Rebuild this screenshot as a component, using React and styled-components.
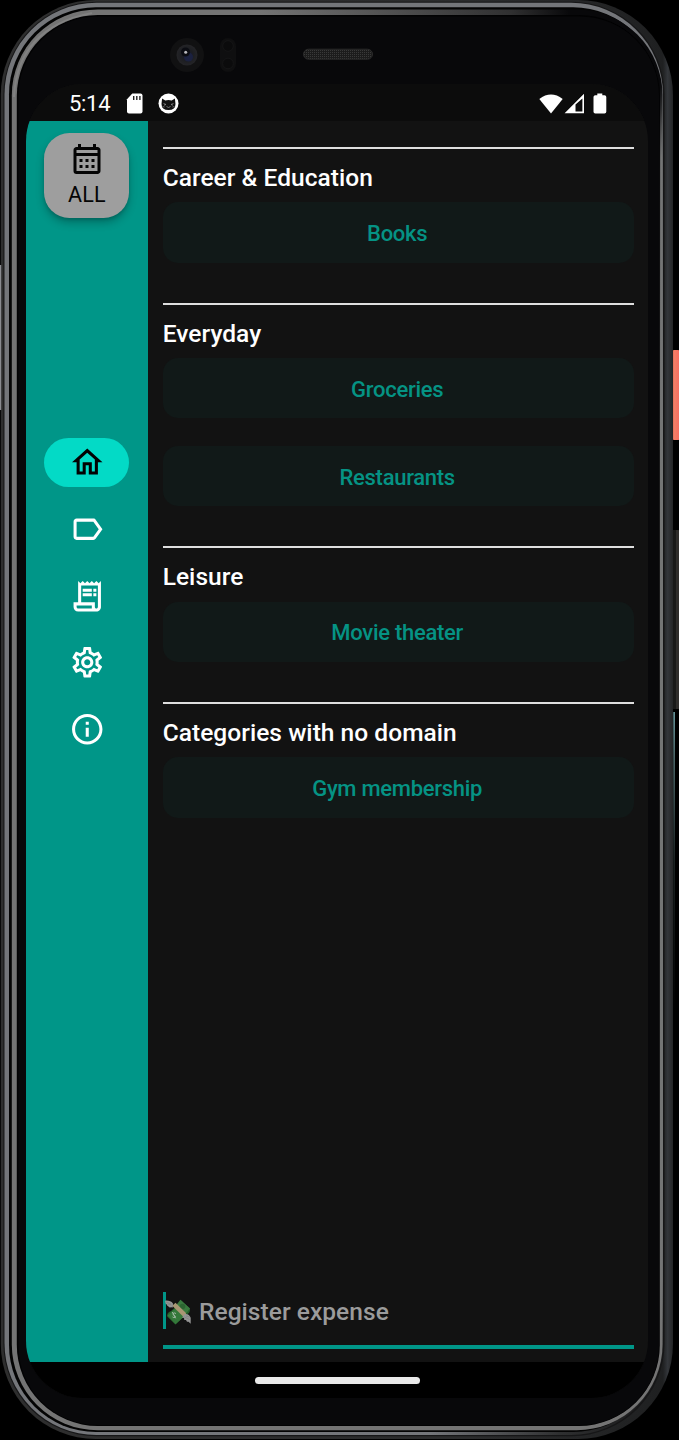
import React from "react";
import styled, { createGlobalStyle } from "styled-components";
import {
  MdOutlineHome,
  MdOutlineLabel,
  MdOutlineReceiptLong,
  MdOutlineSettings,
  MdInfoOutline,
  MdOutlineCalendarMonth,
} from "react-icons/md";

const GlobalStyle = createGlobalStyle`
  *, *::before, *::after { box-sizing: border-box; }
  html, body { margin: 0; padding: 0; background: #000; overflow: hidden; }
  body { font-family: Roboto, "Liberation Sans", sans-serif; }
`;

const Device = styled.div`
  display: grid;
  width: 679px;
  height: 1440px;
  background: #000;
`;

const Casing = styled.svg`
  grid-area: 1 / 1;
  display: block;
`;

const Screen = styled.div`
  grid-area: 1 / 1;
  z-index: 1;
  display: flex;
  flex-direction: column;
  width: 622px;
  height: 1314px;
  margin: 84px 0 0 26px;
  border-radius: 57px;
  overflow: hidden;
  background: #121212;
`;

const StatusBar = styled.header`
  display: flex;
  align-items: center;
  flex: 0 0 36.5px;
  padding: 3px 41px 0 43px;
  background: #0c0c0c;
  color: #fff;
`;

const Clock = styled.span`
  width: 57px;
  font-size: 22px;
  line-height: 32px;
  letter-spacing: -0.3px;
`;

const StatusIcon = styled.svg`
  display: block;
  margin-left: ${(p) => p.$gap || 0}px;
`;

const Spacer = styled.div`
  flex: 1;
`;

const Body = styled.div`
  display: flex;
  flex: 0 0 1241px;
`;

const Rail = styled.nav`
  display: flex;
  flex-direction: column;
  align-items: center;
  flex: 0 0 121.7px;
  padding-top: 12px;
  background: #009688;
`;

const PeriodButton = styled.button`
  display: flex;
  flex-direction: column;
  align-items: center;
  width: 85.2px;
  height: 85px;
  padding: 8px 0 0;
  border: 0;
  border-radius: 25.5px;
  background: #9e9e9e;
  color: #050505;
  box-shadow: 0 5px 8px rgba(0, 0, 0, 0.24), 0 2px 3px rgba(0, 0, 0, 0.12);
  font: 400 21.5px/24px Roboto, "Liberation Sans", sans-serif;
  letter-spacing: 0.1px;
  svg { display: block; margin-bottom: 6.5px; }
`;

const Destinations = styled.div`
  display: flex;
  flex-direction: column;
  gap: 18px;
  margin-top: 220.8px;
`;

const Destination = styled.button`
  display: flex;
  align-items: center;
  justify-content: center;
  width: 85.2px;
  height: 48.7px;
  padding: 0;
  border: 0;
  border-radius: 25px;
  background: ${(p) => (p.$active ? "#03dac6" : "transparent")};
  color: ${(p) => (p.$active ? "#030303" : "#fff")};
  svg { display: block; }
`;

const Content = styled.main`
  display: flex;
  flex-direction: column;
  flex: 1;
  padding: 26.5px 14.3px 13px 15px;
`;

const Domain = styled.section`
  border-top: 2px solid #dedede;
  padding-top: 13px;
  margin-bottom: 40.2px;
`;

const DomainTitle = styled.h2`
  margin: 0 0 8.3px;
  color: #fff;
  font-size: 24.5px;
  font-weight: 500;
  line-height: 32px;
  letter-spacing: 0.04px;
`;

const Categories = styled.div`
  display: flex;
  flex-direction: column;
  gap: 27.5px;
`;

const Category = styled.button`
  height: 60.3px;
  padding: 3px 2px 0 0;
  border: 0;
  border-radius: 15px;
  background: #111918;
  color: #059384;
  font: 500 22px/26px Roboto, "Liberation Sans", sans-serif;
  letter-spacing: -0.28px;
`;

const ExpenseField = styled.div`
  display: flex;
  align-items: flex-start;
  height: 57px;
  margin-top: auto;
  border-bottom: 4px solid #009688;
`;

const Caret = styled.i`
  width: 3.5px;
  height: 37px;
  background: #009688;
`;

const Placeholder = styled.span`
  margin-left: 8.3px;
  color: #9b9b9b;
  font-size: 24.5px;
  font-weight: 500;
  line-height: 40px;
  letter-spacing: 0.05px;
`;

const Emoji = styled.svg`
  display: block;
  margin: 7px 0 0 -1.5px;
`;

const GestureBar = styled.footer`
  display: flex;
  justify-content: center;
  flex: 1;
  padding-top: 15.5px;
  background: #000;
`;

const Handle = styled.div`
  width: 165px;
  height: 6.5px;
  border-radius: 4px;
  background: #e9e9e9;
`;

const domains = [
  { title: "Career & Education", items: ["Books"] },
  { title: "Everyday", items: ["Groceries", "Restaurants"] },
  { title: "Leisure", items: ["Movie theater"] },
  { title: "Categories with no domain", items: ["Gym membership"] },
];

const destinations = [
  ["Home", MdOutlineHome],
  ["Labels", MdOutlineLabel],
  ["Receipts", MdOutlineReceiptLong],
  ["Settings", MdOutlineSettings],
  ["About", MdInfoOutline],
];

function PhoneCasing() {
  return (
    <Casing width="679" height="1440" viewBox="0 0 679 1440" aria-hidden="true">
      <defs>
        <radialGradient id="edge" gradientUnits="userSpaceOnUse" cx="690" cy="1450" r="260">
          <stop offset="0.2" stopColor="#1b1b1c" />
          <stop offset="0.5" stopColor="#2e2f30" />
          <stop offset="1" stopColor="#74767a" />
        </radialGradient>
        <radialGradient id="rim" gradientUnits="userSpaceOnUse" cx="679" cy="0" r="420">
          <stop offset="0.26" stopColor="#08080a" />
          <stop offset="0.4" stopColor="#303031" />
          <stop offset="1" stopColor="#747474" />
        </radialGradient>
        <linearGradient id="side" x1="0" x2="1">
          <stop offset="0" stopColor="#2e2e2e" />
          <stop offset="0.7" stopColor="#2b2c2d" />
          <stop offset="0.985" stopColor="#1f2021" />
          <stop offset="0.992" stopColor="#33363a" />
          <stop offset="1" stopColor="#242526" />
        </linearGradient>
        <linearGradient id="glint" x1="0" x2="0" y1="0" y2="1">
          <stop offset="0" stopColor="#747575" stopOpacity="0" />
          <stop offset="0.06" stopColor="#747575" />
          <stop offset="0.95" stopColor="#747575" />
          <stop offset="1" stopColor="#747575" stopOpacity="0" />
        </linearGradient>
        <linearGradient id="power" x1="0" x2="1">
          <stop offset="0" stopColor="#d9604c" />
          <stop offset="0.3" stopColor="#f47f67" />
          <stop offset="1" stopColor="#fa6a5e" />
        </linearGradient>
        <linearGradient id="reflection" x1="0" x2="0" y1="0" y2="1">
          <stop offset="0" stopColor="#8fd0d8" />
          <stop offset="0.15" stopColor="#6a8f92" />
          <stop offset="0.5" stopColor="#26302f" />
          <stop offset="1" stopColor="#000" />
        </linearGradient>
        <radialGradient id="lens">
          <stop offset="0" stopColor="#15182a" />
          <stop offset="0.6" stopColor="#1d1e22" />
          <stop offset="1" stopColor="#242427" />
        </radialGradient>
        <pattern id="mesh" width="2" height="2" patternUnits="userSpaceOnUse">
          <rect width="2" height="2" fill="#1c1c1c" />
          <rect width="1" height="1" fill="#393939" />
        </pattern>
      </defs>
      <rect x="672" y="350" width="8" height="90" rx="2" fill="url(#power)" />
      <rect x="672" y="530" width="8" height="179" rx="2" fill="#2f2d2b" />
      <rect x="673" y="530" width="3" height="179" fill="#191918" />
      <rect x="673.5" y="712" width="1.2" height="300" fill="url(#reflection)" />
      <rect x="0.8" y="0" width="672.2" height="1439" rx="95" fill="url(#side)" />
      <rect x="3.4" y="1.8" width="661.1" height="1434.4" rx="93" fill="#161617" />
      <rect x="4.5" y="2.7" width="658.5" height="1432.3" rx="92" fill="url(#edge)" />
      <rect x="9" y="7.3" width="651" height="1424.7" rx="87" fill="#040404" />
      <rect x="11.8" y="9.4" width="650.7" height="1420.8" rx="86" fill="url(#rim)" />
      <rect x="660.2" y="82" width="2.5" height="1262" fill="url(#glint)" />
      <rect x="16.8" y="15" width="643" height="1411" rx="81" fill="#020203" />
      <rect x="18.5" y="16.5" width="640.5" height="1408.5" rx="79" fill="#08080a" />
      <path d="M14 97Q17 28 92 13" fill="none" stroke="#9a9a9a" strokeWidth="2" opacity=".35" />
      <path d="M.6 265v145" stroke="#8a8b90" strokeWidth="1.2" />
      <circle cx="187" cy="55" r="17" fill="#111112" />
      <circle cx="187" cy="55" r="10.5" fill="url(#lens)" />
      <circle cx="188.5" cy="57" r="4.5" fill="#1b2140" />
      <circle cx="185.5" cy="52" r="4.5" fill="#0b0c12" />
      <circle cx="185.7" cy="52.2" r="1.5" fill="#b9b9bd" />
      <rect x="220" y="38" width="16" height="34" rx="8" fill="#0f0f10" />
      <circle cx="228" cy="46" r="5.3" fill="#0b0b0c" stroke="#151516" />
      <circle cx="228" cy="63.5" r="5.3" fill="#0b0b0c" stroke="#151516" />
      <rect x="303.5" y="49.2" width="69" height="10" rx="5" fill="url(#mesh)" stroke="#2b2b2b" />
    </Casing>
  );
}

function FlyingMoney() {
  return (
    <Emoji width="26" height="26" viewBox="0 0 26 26" aria-hidden="true">
      <path d="M15.4.8 25 9.4q.5 5-4.5 6.6L10.4 25.4 2.2 17.6Q1.500 13.500 6 12L14.500 4.500Z" fill="#25602b" />
      <path d="m15.4.8 9.6 8.600-4.500 5.600-9.400-8.700Z" fill="#397a3e" />
      <path d="m10.400 9.200 9.400 7.600-9.200 8.400-8.100-8.600Z" fill="#34783a" />
      <circle cx="17.500" cy="7.500" r="2.800" fill="#2c6531" />
      <path d="M11 14.500q-2-1.300-3 .1c-1 1.700 3.200 1.700 2.200 3.500q-1.200 1.200-2.700-.2M7.300 13l3.400 6.300" fill="none" stroke="#9fb7a1" strokeWidth="1" />
      <path d="m7.200 6.700 3.300-3 10.700 10.500-2.800 3.500Z" fill="#a99774" />
      <path d="M8 4.600C6.300 1.900 3.200 1.400.8 1.600q-1.200.8-.3 2.200 0 1.500 1.300 1.800.2 1.700 1.700 1.800.8 1.500 2.400.9l1.900.3Z" fill="#959595" />
      <path d="M19.500 15.200c3-.7 5.200.7 6.200 3.500v6.100l-2.200-2.100-1.500.1-1-1.700-1.700-.2-.3-1.800-2-.5Z" fill="#959595" />
      <path d="m1 3 5 2M2.500 5l4 1M19.500 18l5 2.500M21 17l4 1" stroke="#777" strokeWidth=".5" />
    </Emoji>
  );
}

export default function App() {
  return (
    <Device>
      <GlobalStyle />
      <PhoneCasing />
      <Screen>
        <StatusBar>
          <Clock>5:14</Clock>
          <StatusIcon width="17" height="21" viewBox="0 0 17 21">
            <path d="M6.300.5H14.500Q16.500.5 16.500 2.500V18.500Q16.500 20.500 14.500 20.500H3Q1 20.500 1 18.500V6.200Z" fill="#fff" />
            <path d="M7.700 3v4M10.800 3v4M13.900 3v4" stroke="#222" strokeWidth="1.4" />
          </StatusIcon>
          <StatusIcon $gap={15} width="21" height="21" viewBox="0 0 21 21">
            <circle cx="10.500" cy="10.500" r="10" fill="#fff" />
            <path d="M4.100 5.500 7.300 7.500Q10.500 6.700 13.700 7.500L16.900 5.500 17.500 11Q17.500 17 10.500 17T3.500 11Z" fill="#111" />
            <path d="m5.500 10.500 2.500 1-2 .7M15.500 10.500l-2.500 1 2 .7M8.500 13.500l2 1 2-1M4.500 13.500l2 .5M16.500 13.500l-2 .5" stroke="#999" strokeWidth=".7" fill="none" />
          </StatusIcon>
          <Spacer />
          <StatusIcon width="24" height="20" viewBox="0 0 24 20">
            <path d="M.3 4.900Q12-4 23.700 4.900L12 19.500Z" fill="#fff" />
          </StatusIcon>
          <StatusIcon $gap={1} width="21" height="21" viewBox="0 0 21 21">
            <path fillRule="evenodd" d="M20 .8V20.200H.6ZM18.400 5.500 11.500 11.500V18.600H18.400Z" fill="#fff" />
            <path d="M12.200 12.500v5.200h5.400V7.800Z" fill="#0c0c0c" />
          </StatusIcon>
          <StatusIcon $gap={8} width="14" height="21" viewBox="0 0 14 21">
            <path d="M4.300.5h5v1.700h2.200q1.800 0 1.800 1.800v14.700q0 1.800-1.800 1.800H2.300q-1.800 0-1.800-1.800V4q0-1.800 1.800-1.800h2Z" fill="#fff" />
          </StatusIcon>
        </StatusBar>
        <Body>
          <Rail>
            <PeriodButton>
              <MdOutlineCalendarMonth size={36} />
              ALL
            </PeriodButton>
            <Destinations>
              {destinations.map(([name, Icon], i) => (
                <Destination key={name} $active={i === 0} aria-label={name}>
                  <Icon size={36.5} />
                </Destination>
              ))}
            </Destinations>
          </Rail>
          <Content>
            {domains.map((d) => (
              <Domain key={d.title}>
                <DomainTitle>{d.title}</DomainTitle>
                <Categories>
                  {d.items.map((item) => (
                    <Category key={item}>{item}</Category>
                  ))}
                </Categories>
              </Domain>
            ))}
            <ExpenseField>
              <Caret />
              <FlyingMoney />
              <Placeholder>Register expense</Placeholder>
            </ExpenseField>
          </Content>
        </Body>
        <GestureBar>
          <Handle />
        </GestureBar>
      </Screen>
    </Device>
  );
}
